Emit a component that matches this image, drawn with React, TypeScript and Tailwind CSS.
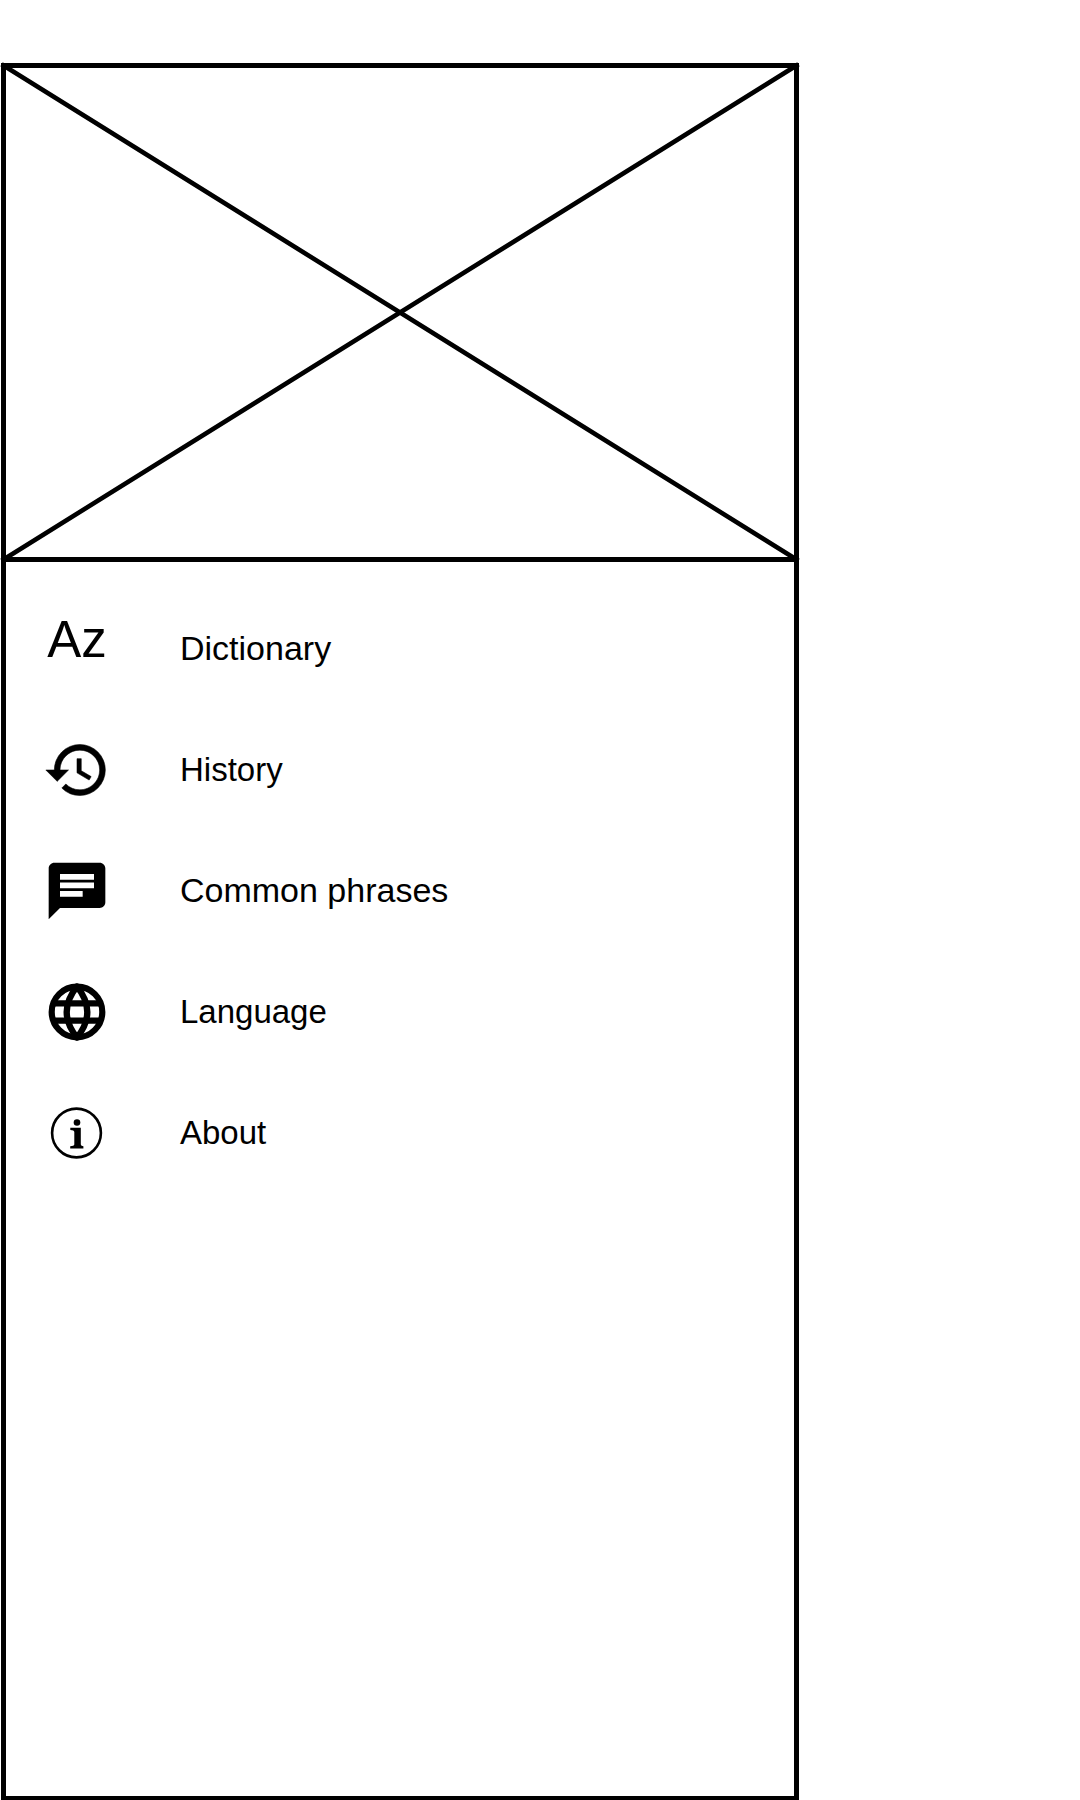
import type { ReactNode } from "react";
import { MdChat, MdHistory } from "react-icons/md";

type MenuItem = {
  label: string;
  icon: ReactNode;
  size: string;
};

function InfoIcon() {
  return (
    <svg viewBox="0 0 68 68" className="size-[68px]" aria-hidden="true">
      <circle cx="33.5" cy="34" r="24.4" fill="none" stroke="currentColor" strokeWidth="2.6" />
      <circle cx="34" cy="23.5" r="3.3" fill="currentColor" />
      <path
        d="M27.3 28.7H37.8V45.5Q38 47.1 40.4 47.3V49.5H27.2V47.3Q31 47.1 31.3 45.5V32.9Q31.2 31.1 27.3 30.9Z"
        fill="currentColor"
      />
    </svg>
  );
}

function GlobeIcon() {
  return (
    <svg
      viewBox="-34 -34 68 68"
      className="size-[68px]"
      fill="none"
      stroke="currentColor"
      strokeWidth="6.2"
      aria-hidden="true"
    >
      <circle r="25.3" />
      <path d="M0 -25.5Q20.6 0 0 25.5Q-20.6 0 0 -25.5Z" strokeLinejoin="round" />
      <path d="M-24 -8.6H24M-24 8.6H24" />
    </svg>
  );
}

const items: MenuItem[] = [
  {
    label: "Dictionary",
    size: "text-[34px]",
    icon: (
      <span aria-hidden="true" className="pb-[18px] text-[51px] leading-none">
        Az
      </span>
    ),
  },
  {
    label: "History",
    size: "text-[33px]",
    icon: <MdHistory className="size-[68px] [stroke-width:0.2] [&>path:first-child]:stroke-none" />,
  },
  { label: "Common phrases", size: "text-[34px]", icon: <MdChat className="size-[68px]" /> },
  { label: "Language", size: "text-[33px]", icon: <GlobeIcon /> },
  { label: "About", size: "text-[33px]", icon: <InfoIcon /> },
];

function ImagePlaceholder() {
  return (
    <svg
      viewBox="0 0 798 499"
      className="block h-auto w-full overflow-visible"
      fill="none"
      stroke="black"
      strokeWidth="5"
      role="img"
      aria-label="Header image"
    >
      <rect x="2.5" y="2.5" width="793" height="494" />
      <path d="M2.5 2.5L795.5 496.5M795.5 2.5L2.5 496.5" strokeWidth="4.6" strokeLinecap="square" />
    </svg>
  );
}

export default function App() {
  return (
    <div className="flex min-h-screen flex-col bg-white pt-[63px] pl-px font-['Liberation_Sans',Arial,sans-serif] text-black">
      <main className="flex w-full max-w-[798px] flex-1 flex-col">
        <ImagePlaceholder />
        <nav className="flex-1 border-x-[5px] border-b-4 border-black pt-[26px]">
          <ul>
            {items.map((item) => (
              <li key={item.label}>
                <button
                  type="button"
                  className="flex h-[121px] w-full cursor-pointer items-center gap-[69px] pl-[37px] text-left"
                >
                  <span className="flex w-[68px] shrink-0 justify-center">{item.icon}</span>
                  <span className={item.size}>{item.label}</span>
                </button>
              </li>
            ))}
          </ul>
        </nav>
      </main>
    </div>
  );
}
